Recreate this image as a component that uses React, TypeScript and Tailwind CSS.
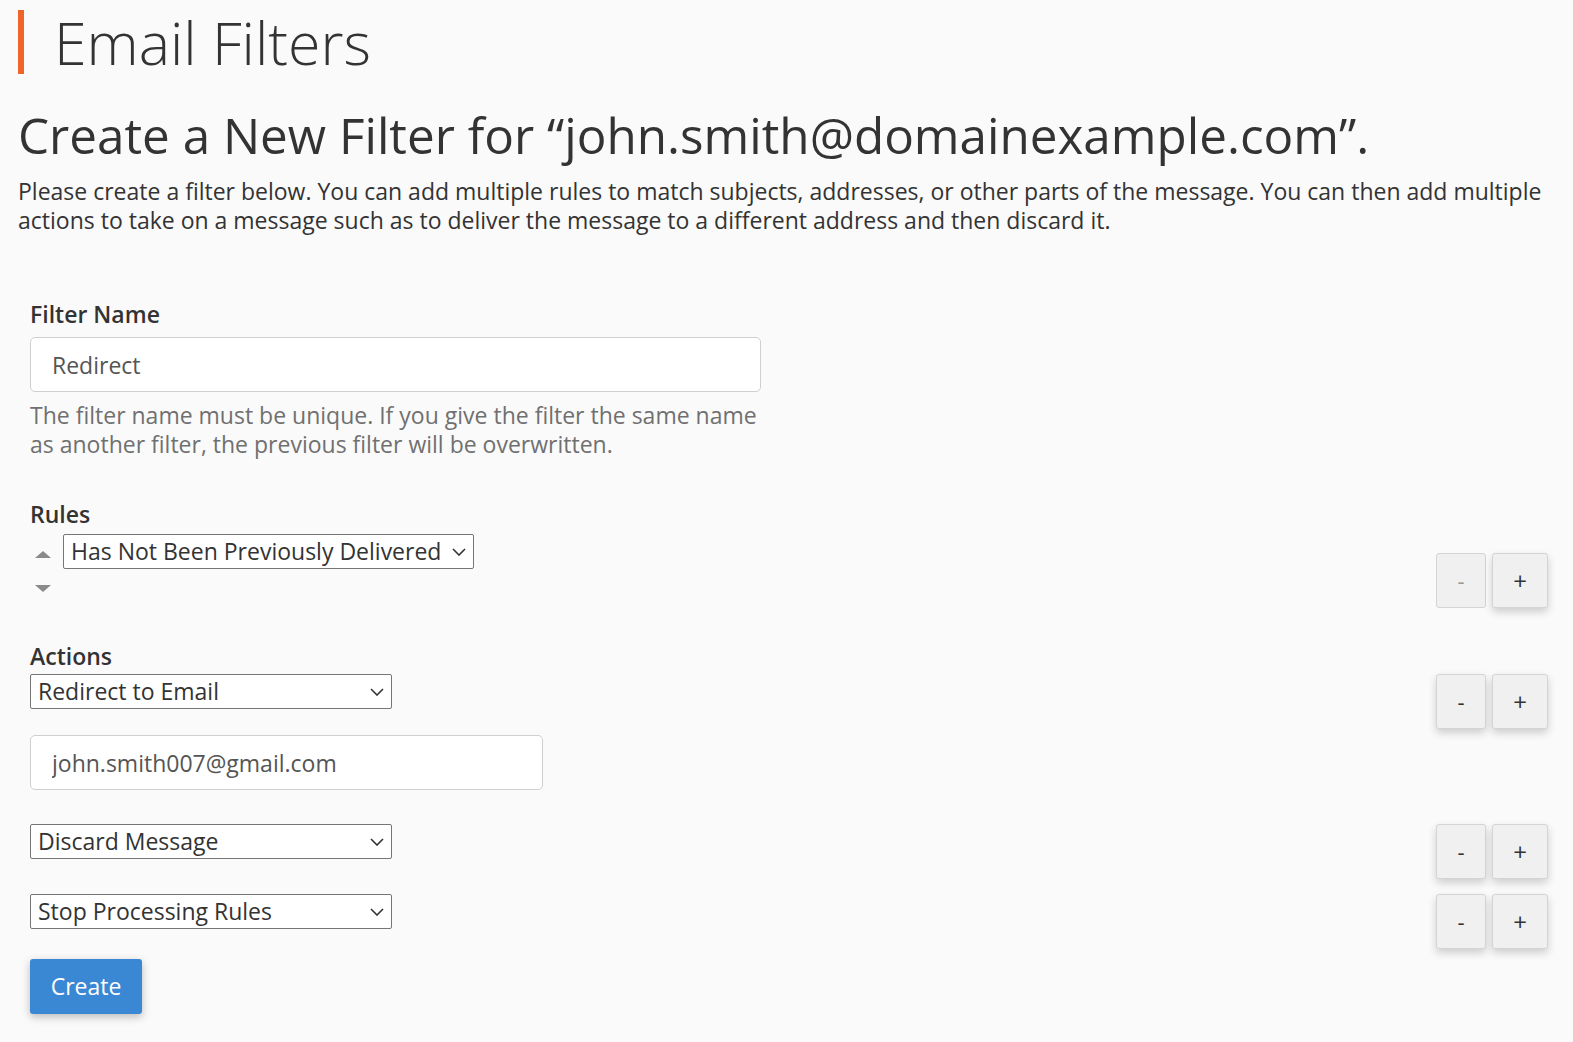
const font = { fontFamily: '"Open Sans", "Noto Sans", sans-serif' };

function Select({ value, width }: { value: string; width: string }) {
  return (
    <div className={`relative ${width}`}>
      <select
        defaultValue={value}
        className="h-[35px] w-full appearance-none rounded-[2px] border border-[#767676] bg-white pl-[7px] pr-8 text-[23px] leading-[33px] text-[#333]"
      >
        <option>{value}</option>
      </select>
      <svg
        className="pointer-events-none absolute right-[8px] top-[14px]"
        width="14"
        height="8"
        viewBox="0 0 14 8"
        fill="none"
        stroke="#333"
        strokeWidth="1.6"
      >
        <polyline points="1,1 7,7 13,1" />
      </svg>
    </div>
  );
}

function RowButtons({ disabledMinus = false }: { disabledMinus?: boolean }) {
  return (
    <div className="flex gap-[6px]">
      <button
        className={`flex h-[55px] w-[50px] items-center justify-center rounded-[3px] border border-[#d4d4d4] bg-[#f0f0f0] text-[22px] ${
          disabledMinus ? 'text-[#999]' : 'text-[#333] shadow-[0_4px_8px_rgba(0,0,0,0.18)]'
        }`}
      >
        -
      </button>
      <button className="flex h-[55px] w-[56px] items-center justify-center rounded-[3px] border border-[#d4d4d4] bg-[#f0f0f0] text-[24px] text-[#333] shadow-[0_4px_8px_rgba(0,0,0,0.18)]">
        +
      </button>
    </div>
  );
}

export default function App() {
  return (
    <div className="min-h-[1042px] bg-[#fafafa] pl-[18px] pr-[25px] pt-[10px] text-[#333]" style={font}>
      <div className="flex h-[64px] items-center border-l-[6px] border-[#f0632a] pl-[30px]">
        <h1 className="text-[59px] font-light leading-[64px] text-[#333]">Email Filters</h1>
      </div>

      <h2 className="mt-[33px] text-[49.4px] leading-[56px] text-[#333]">
        Create a New Filter for “john.smith@domainexample.com”.
      </h2>
      <p className="mt-[14px] text-[23px] leading-[29px] text-[#333]">
        Please create a filter below. You can add multiple rules to match subjects, addresses, or other parts of the
        message. You can then add multiple actions to take on a message such as to deliver the message to a different
        address and then discard it.
      </p>

      <div className="mt-[65px] pl-[12px]">
        <label className="block text-[23px] font-semibold leading-[29px]">Filter Name</label>
        <input
          defaultValue="Redirect"
          className="mt-[8px] block h-[55px] w-[731px] rounded-[5px] border border-[#cfcfcf] bg-white px-[21px] text-[23px] text-[#555]"
        />
        <p className="mt-[9px] w-[740px] text-[23px] leading-[29px] text-[#707070]">
          The filter name must be unique. If you give the filter the same name as another filter, the previous filter
          will be overwritten.
        </p>

        <label className="mt-[41px] block text-[23px] font-semibold leading-[29px]">Rules</label>
        <div className="mt-[5px] flex items-start justify-between">
          <div className="flex items-start gap-[12px] pl-[5px]">
            <div className="flex flex-col items-center gap-[27px] pt-[17px]">
              <div className="h-0 w-0 border-x-[8px] border-b-[7px] border-x-transparent border-b-[#8a8a8a]" />
              <div className="h-0 w-0 border-x-[8px] border-t-[7px] border-x-transparent border-t-[#8a8a8a]" />
            </div>
            <Select value="Has Not Been Previously Delivered" width="w-[411px]" />
          </div>
          <div className="mt-[19px]">
            <RowButtons disabledMinus />
          </div>
        </div>

        <label className="mt-[34px] block text-[23px] font-semibold leading-[29px]">Actions</label>
        <div className="mt-[3px] flex items-start justify-between">
          <div>
            <Select value="Redirect to Email" width="w-[362px]" />
            <input
              defaultValue="john.smith007@gmail.com"
              className="mt-[26px] block h-[55px] w-[513px] rounded-[5px] border border-[#cfcfcf] bg-white px-[21px] text-[23px] text-[#555]"
            />
          </div>
          <RowButtons />
        </div>

        <div className="mt-[34px] flex items-start justify-between">
          <Select value="Discard Message" width="w-[362px]" />
          <RowButtons />
        </div>

        <div className="mt-[15px] flex items-start justify-between">
          <Select value="Stop Processing Rules" width="w-[362px]" />
          <RowButtons />
        </div>

        <button className="mt-[10px] h-[55px] w-[112px] rounded-[3px] bg-[#3a87d3] text-[23px] text-white shadow-[0_3px_8px_rgba(0,0,0,0.25)]">
          Create
        </button>
      </div>
    </div>
  );
}
